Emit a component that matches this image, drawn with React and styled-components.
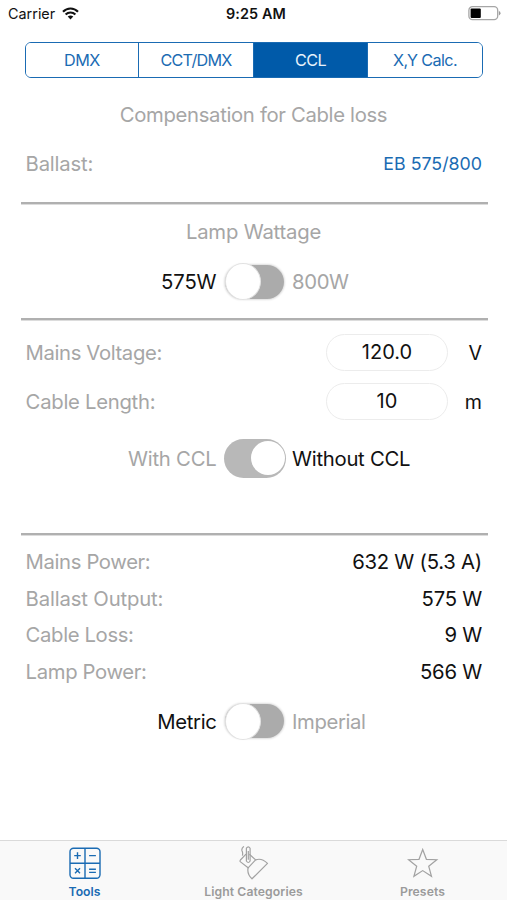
import React, { useState } from 'react';
import styled, { createGlobalStyle } from 'styled-components';

const GlobalStyle = createGlobalStyle`
  * {
    box-sizing: border-box;
  }

  body {
    margin: 0;
    background: #fff;
    font-family: Inter, 'Liberation Sans', sans-serif;
  }
`;

const blue = '#1a6bb3';
const grey = '#a6a6a6';

const Screen = styled.div`
  width: 507px;
  height: 900px;
  display: flex;
  flex-direction: column;
  background: #fff;
  overflow: hidden;
  font-size: 20.3px;
  white-space: nowrap;
`;

const StatusBar = styled.div`
  height: 27px;
  flex: none;
  display: grid;
  grid-template-columns: 1fr auto 1fr;
  align-items: center;
  padding: 0 6px 0 8px;
  font-size: 14.4px;
  color: #111;
`;

const Carrier = styled.div`
  display: flex;
  align-items: center;
  gap: 7px;
`;

const Clock = styled.div`
  font-weight: 600;
  letter-spacing: 0.1px;
  padding-left: 3px;
`;

const BatteryIcon = styled.svg`
  justify-self: end;
`;

const Segments = styled.div`
  height: 36px;
  flex: none;
  margin: 15px 24px 0 25px;
  display: grid;
  grid-template-columns: 112px 115px 114px 1fr;
  border: 1.4px solid ${blue};
  border-radius: 6px;
  overflow: hidden;
`;

const Segment = styled.button`
  border: 0;
  border-left: ${(p) => (p.$first ? '0' : `1px solid ${blue}`)};
  padding: 0;
  font-family: inherit;
  font-size: 16.2px;
  letter-spacing: ${(p) => p.$track || 0}px;
  background: ${(p) => (p.$active ? '#005aa9' : '#fff')};
  color: ${(p) => (p.$active ? '#e8f2fb' : blue)};
`;

const Heading = styled.div`
  height: ${(p) => p.$height}px;
  flex: none;
  display: flex;
  align-items: center;
  justify-content: center;
  color: ${grey};
  letter-spacing: ${(p) => p.$track || 0}px;
`;

const Row = styled.div`
  height: ${(p) => p.$height}px;
  flex: none;
  display: flex;
  align-items: center;
  padding: 0 25px;
`;

const Label = styled.div`
  flex: 1;
  padding-left: 0.6px;
  color: ${grey};
  letter-spacing: ${(p) => p.$track || 0}px;
`;

const Value = styled.div`
  color: #111;
  letter-spacing: -0.24px;
`;

const Link = styled.div`
  font-size: 17.8px;
  color: ${blue};
`;

const Divider = styled.div`
  height: 3px;
  flex: none;
  margin: 0 19px 0 21px;
  border-top: 2px solid #b0b0b0;
  border-bottom: 1px solid #dcdcdc;
`;

const Field = styled.input`
  width: 122px;
  height: 37px;
  border: 1px solid #ececec;
  border-radius: 19px;
  padding: 0 0 1px;
  text-align: center;
  font-family: inherit;
  font-size: 20px;
  color: #111;
  background: #fff;
  outline: none;
`;

const Unit = styled.div`
  width: 34px;
  text-align: right;
  font-size: 19.6px;
  color: #111;
`;

const SwitchRow = styled.div`
  height: ${(p) => p.$height}px;
  flex: none;
  display: grid;
  grid-template-columns: 216.5px 75.5px 1fr;
  align-items: center;
`;

const Option = styled.div`
  text-align: ${(p) => (p.$right ? 'right' : 'left')};
  color: ${(p) => (p.$active ? '#111' : grey)};
  letter-spacing: ${(p) => p.$track || 0}px;
`;

const Track = styled.button`
  justify-self: start;
  width: ${(p) => (p.$on ? 62 : 59)}px;
  height: ${(p) => (p.$on ? 39 : 34)}px;
  margin-left: ${(p) => (p.$on ? 7.5 : 8.5)}px;
  padding: 0 ${(p) => (p.$on ? 1.5 : 0)}px 0 0;
  border: 0;
  border-radius: 20px;
  display: flex;
  align-items: center;
  justify-content: ${(p) => (p.$on ? 'flex-end' : 'flex-start')};
  background: ${(p) => (p.$on ? '#b8b8b8' : '#ababab')};
  box-shadow: ${(p) => (p.$on ? 'none' : '0 0 2px 1px #dedede')};
`;

const Knob = styled.span`
  width: ${(p) => (p.$on ? 34 : 36)}px;
  height: ${(p) => (p.$on ? 34 : 37)}px;
  flex: none;
  margin-left: ${(p) => (p.$on ? 0 : -0.5)}px;
  border-radius: 50%;
  background: #fff;
  border: ${(p) => (p.$on ? '0' : '1px solid #e2e2e2')};
`;

const Spacer = styled.div`
  height: ${(p) => p.$height}px;
  flex: none;
`;

const TabBar = styled.nav`
  height: 60px;
  flex: none;
  margin-top: auto;
  display: grid;
  grid-template-columns: repeat(3, 1fr);
  background: #f9f9f9;
  border-top: 1px solid #dadada;
`;

const Tab = styled.div`
  display: flex;
  flex-direction: column;
  align-items: center;
  padding-top: 5px;
  font-size: 12.2px;
  font-weight: 600;
  line-height: 16px;
  letter-spacing: ${(p) => p.$track || 0}px;
  color: ${(p) => (p.$active ? blue : '#9b9b9b')};

  svg {
    margin-bottom: 4px;
  }
`;

const Wifi = () => (
  <svg width="17" height="13" viewBox="0 0 17 13" fill="none" stroke="#111" strokeWidth="2.1">
    <path d="M1 4.8 C5.2 0.4 11.8 0.4 16 4.8" />
    <path d="M3.6 7.6 C6.4 4.8 10.6 4.8 13.4 7.6" />
    <path d="M8.5 12.4 L5.7 9.6 Q8.5 7.4 11.3 9.6 Z" fill="#111" stroke="none" />
  </svg>
);

const Battery = () => (
  <BatteryIcon width="33" height="15" viewBox="0 0 33 15">
    <rect x="0.9" y="0.7" width="28.8" height="13" rx="3.6" fill="none" stroke="#a6a6a6" strokeWidth="1.3" />
    <rect x="2.6" y="2.6" width="10.2" height="9.3" rx="1" fill="#000" />
    <path d="M30.9 5 Q32.5 5.6 32.5 7.2 Q32.5 8.8 30.9 9.4 Z" fill="#999" />
  </BatteryIcon>
);

const ToolsIcon = () => (
  <svg width="32" height="34" viewBox="0 0 32 34" fill="none" stroke={blue} strokeWidth="1.4">
    <rect x="1" y="2.2" width="30" height="30" rx="3.5" />
    <path d="M16 2.2 V32.2 M1 17.2 H31" />
    <path d="M8.5 6.3 V12.9 M5.2 9.6 H11.8 M20.1 9.6 H26.9" />
    <path d="M6 22.2 L11 27.2 M11 22.2 L6 27.2 M20.1 23.2 H26.9 M20.1 26.4 H26.9" />
  </svg>
);

const LightIcon = () => (
  <svg width="32" height="34" viewBox="0 0 32 34" fill="none" stroke="#a2a2a2" strokeWidth="1.2" strokeLinejoin="round">
    <path d="M8 8.2 L2.4 14 Q1.6 15 2.5 15.9 L10.1 21.8 L17.6 13.9 L11.4 8.2" />
    <path d="M17.6 13.9 Q23.6 11.6 29.5 17.4 L14 32.8 Q8.8 27.8 10.1 21.8" />
    <path d="M8.4 2.2 V15 Q10.3 18 12.1 15 V2.2 Q10.3 -0.6 8.4 2.2 Z M10.3 5 V13.8" />
    <path d="M5.9 0.4 Q3.2 2.6 4 4.8 Q5.1 7.1 4.4 9.6" />
  </svg>
);

const StarIcon = () => (
  <svg width="32" height="34" viewBox="0 0 32 34" fill="none" stroke="#a2a2a2" strokeWidth="1.2" strokeLinejoin="miter">
    <path d="M15.7 3.5 L19.4 13.3 L29.8 13.7 L21.7 20.2 L24.5 30.3 L15.7 24.6 L6.9 30.3 L9.7 20.2 L1.6 13.7 L12 13.3 Z" />
  </svg>
);

const Switch = ({ left, right, value, onChange, height, leftTrack, rightTrack }) => (
  <SwitchRow $height={height}>
    <Option $right $active={!value} $track={leftTrack}>{left}</Option>
    <Track $on={value} onClick={() => onChange(!value)}>
      <Knob $on={value} />
    </Track>
    <Option $active={value} $track={rightTrack}>{right}</Option>
  </SwitchRow>
);

const results = [
  { label: 'Mains Power:', value: '632 W (5.3 A)', track: -0.37 },
  { label: 'Ballast Output:', value: '575 W', track: -0.15 },
  { label: 'Cable Loss:', value: '9 W', track: -0.36 },
  { label: 'Lamp Power:', value: '566 W', track: -0.36 },
];

const App = () => {
  const [highWattage, setHighWattage] = useState(false);
  const [withoutCcl, setWithoutCcl] = useState(true);
  const [imperial, setImperial] = useState(false);

  return (
    <>
      <GlobalStyle />
      <Screen>
        <StatusBar>
          <Carrier>
            Carrier
            <Wifi />
          </Carrier>
          <Clock>9:25 AM</Clock>
          <Battery />
        </StatusBar>

        <Segments>
          <Segment $first $track={-0.5}>DMX</Segment>
          <Segment $track={-0.75}>CCT/DMX</Segment>
          <Segment $active $track={-0.6}>CCL</Segment>
          <Segment $track={-0.6}>X,Y Calc.</Segment>
        </Segments>

        <Heading $height={73} $track={-0.33}>Compensation for Cable loss</Heading>
        <Row $height={24}>
          <Label $track={-0.2}>Ballast:</Label>
          <Link>EB 575/800</Link>
        </Row>
        <Spacer $height={27} />
        <Divider />

        <Heading $height={52} $track={-0.2}>Lamp Wattage</Heading>
        <Switch
          left="575W"
          right="800W"
          value={highWattage}
          onChange={setHighWattage}
          height={49}
          leftTrack={-0.1}
          rightTrack={-0.35}
        />
        <Spacer $height={12} />
        <Divider />

        <Spacer $height={7} />
        <Row $height={49}>
          <Label $track={-0.38}>Mains Voltage:</Label>
          <Field defaultValue="120.0" />
          <Unit>V</Unit>
        </Row>
        <Row $height={49}>
          <Label $track={-0.28}>Cable Length:</Label>
          <Field defaultValue="10" />
          <Unit>m</Unit>
        </Row>
        <Switch
          left="With CCL"
          right="Without CCL"
          value={withoutCcl}
          onChange={setWithoutCcl}
          height={64}
          leftTrack={-0.22}
          rightTrack={-0.26}
        />
        <Spacer $height={43} />
        <Divider />

        <Spacer $height={7} />
        {results.map((item) => (
          <Row key={item.label} $height={36.7}>
            <Label $track={item.track}>{item.label}</Label>
            <Value>{item.value}</Value>
          </Row>
        ))}
        <Switch
          left="Metric"
          right="Imperial"
          value={imperial}
          onChange={setImperial}
          height={63}
          leftTrack={-0.33}
          rightTrack={-0.38}
        />

        <TabBar>
          <Tab $active>
            <ToolsIcon />
            Tools
          </Tab>
          <Tab $track={0.1}>
            <LightIcon />
            Light Categories
          </Tab>
          <Tab $track={0.1}>
            <StarIcon />
            Presets
          </Tab>
        </TabBar>
      </Screen>
    </>
  );
};

export default App;
